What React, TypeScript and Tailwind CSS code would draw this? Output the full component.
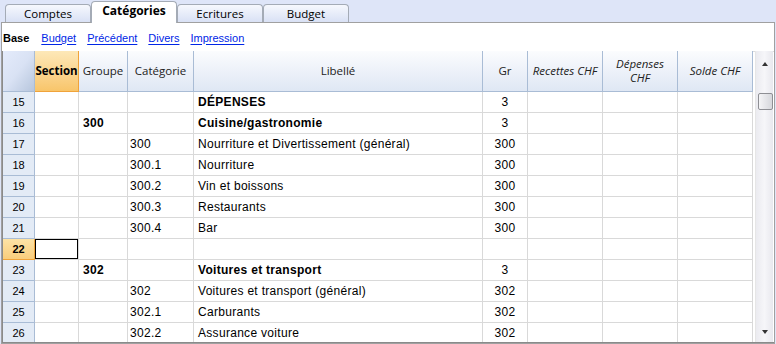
import React from "react";

type Row = {
  n: number;
  groupe?: string;
  cat?: string;
  label?: string;
  gr?: string;
  bold?: boolean;
  selected?: boolean;
};

const rows: Row[] = [
  { n: 15, label: "DÉPENSES", gr: "3", bold: true },
  { n: 16, groupe: "300", label: "Cuisine/gastronomie", gr: "3", bold: true },
  { n: 17, cat: "300", label: "Nourriture et Divertissement (général)", gr: "300" },
  { n: 18, cat: "300.1", label: "Nourriture", gr: "300" },
  { n: 19, cat: "300.2", label: "Vin et boissons", gr: "300" },
  { n: 20, cat: "300.3", label: "Restaurants", gr: "300" },
  { n: 21, cat: "300.4", label: "Bar", gr: "300" },
  { n: 22, selected: true },
  { n: 23, groupe: "302", label: "Voitures et transport", gr: "3", bold: true },
  { n: 24, cat: "302", label: "Voitures et transport (général)", gr: "302" },
  { n: 25, cat: "302.1", label: "Carburants", gr: "302" },
  { n: 26, cat: "302.2", label: "Assurance voiture", gr: "302" },
];

const tabs = ["Comptes", "Catégories", "Ecritures", "Budget"];
const links = ["Budget", "Précédent", "Divers", "Impression"];

// column widths: row no, section, groupe, catégorie, libellé, gr, recettes, dépenses, solde
const cols = "grid grid-cols-[32px_44px_49px_66px_289px_45px_75px_75px_75px]";

const headCell =
  "flex items-center justify-center border-r border-b border-[#a9bcd5] bg-gradient-to-b from-[#fbfcfe] to-[#dfe7f4] font-['Open_Sans',sans-serif] text-[11.5px] text-[#222] leading-[14px] text-center";

export default function App() {
  return (
    <div className="w-[776px] h-[344px] overflow-hidden bg-[#dee5f8] font-['Liberation_Sans',Arial,sans-serif] text-black">
      {/* Tabs */}
      <div className="flex items-end h-[22px] pl-[5px]">
        {tabs.map((t, i) =>
          i === 1 ? (
            <div
              key={t}
              className="relative z-10 -mb-px flex h-[22px] w-[86px] items-center justify-center rounded-t-[4px] border border-b-0 border-[#a4abb6] bg-white pb-[3px] font-['Open_Sans',sans-serif] text-[12px] font-bold"
            >
              {t}
            </div>
          ) : (
            <div
              key={t}
              className="flex h-[18px] w-[86px] items-center justify-center rounded-t-[4px] border border-b-0 border-[#a4abb6] bg-gradient-to-b from-[#f6f8fd] to-[#d9e1f5] font-['Open_Sans',sans-serif] text-[11.5px]"
            >
              {t}
            </div>
          )
        )}
      </div>

      {/* Panel */}
      <div className="ml-[1px] w-[774px] h-[322px] border border-[#a0a0a0] bg-white">
        <div className="flex h-[28px] items-center gap-[11px] pl-[1px] pt-[2px] text-[11px]">
          <span className="font-bold mr-[1px]">Base</span>
          {links.map((l) => (
            <span key={l} className="text-[#0026e6] underline underline-offset-2">
              {l}
            </span>
          ))}
        </div>

        {/* Grid */}
        <div className="flex h-[292px] border-l border-b border-[#8a8a8a] shadow-[inset_1px_1px_0_#dcdcdc] overflow-hidden">
          <div className="w-[750px] shrink-0">
            <div className={`${cols} h-[41px]`}>
              <div className="border-r border-b border-[#a9bcd5] bg-gradient-to-br from-[#e4ebfb] via-[#d9e2f4] to-[#b7c6dd]" />
              <div className="flex items-center justify-center border-r border-b border-[#f0a33a] bg-gradient-to-b from-[#fde8b8] to-[#f8c56a] font-['Open_Sans',sans-serif] text-[11.5px] font-bold">
                Section
              </div>
              <div className={headCell}>Groupe</div>
              <div className={headCell}>Catégorie</div>
              <div className={headCell}>Libellé</div>
              <div className={headCell}>Gr</div>
              <div className={`${headCell} italic`}>Recettes CHF</div>
              <div className={`${headCell} italic`}>
                Dépenses
                <br />
                CHF
              </div>
              <div className={`${headCell} italic`}>Solde CHF</div>
            </div>

            {rows.map((r) => (
              <div key={r.n} className={`${cols} h-[21px] text-[12px] tracking-[0.3px]`}>
                <div
                  className={`flex items-center justify-center border-r border-b text-[11px] tracking-normal ${
                    r.selected
                      ? "border-[#f0a33a] bg-gradient-to-b from-[#fde3a6] to-[#f9cd7c] font-bold"
                      : "border-[#a9bcd5] bg-[#e3ebf6]"
                  }`}
                >
                  {r.n}
                </div>
                <div
                  className={`border-r border-b border-[#d9d9d9] ${
                    r.selected ? "shadow-[inset_0_0_0_1px_#000]" : ""
                  }`}
                />
                <div className="flex items-center px-[4px] border-r border-b border-[#d9d9d9] font-bold">
                  {r.groupe}
                </div>
                <div className="flex items-center px-[2px] border-r border-b border-[#d9d9d9]">{r.cat}</div>
                <div
                  className={`flex items-center px-[4px] border-r border-b border-[#d9d9d9] whitespace-nowrap ${
                    r.bold ? "font-bold" : ""
                  }`}
                >
                  {r.label}
                </div>
                <div className="flex items-center justify-center border-r border-b border-[#d9d9d9]">{r.gr}</div>
                <div className="border-r border-b border-[#d9d9d9]" />
                <div className="border-r border-b border-[#d9d9d9]" />
                <div className="border-r border-b border-[#d9d9d9]" />
              </div>
            ))}
          </div>

          {/* Scrollbar */}
          <div className="relative ml-[2px] w-[18px] shrink-0 border-l border-[#e6e6e6] bg-gradient-to-r from-[#ebebf0] via-[#f6f6f9] to-[#e8e8ee]">
            <div className="absolute left-[6px] top-[11px] h-0 w-0 border-x-[3.5px] border-b-[4px] border-x-transparent border-b-[#333]" />
            <div className="absolute left-[2px] top-[42px] h-[17px] w-[15px] rounded-[2px] border border-[#8e8f94] bg-gradient-to-r from-[#f5f5f7] to-[#d6d7dc]" />
            <div className="absolute left-[6px] bottom-[8px] h-0 w-0 border-x-[3.5px] border-t-[4px] border-x-transparent border-t-[#333]" />
          </div>
        </div>
      </div>
    </div>
  );
}
